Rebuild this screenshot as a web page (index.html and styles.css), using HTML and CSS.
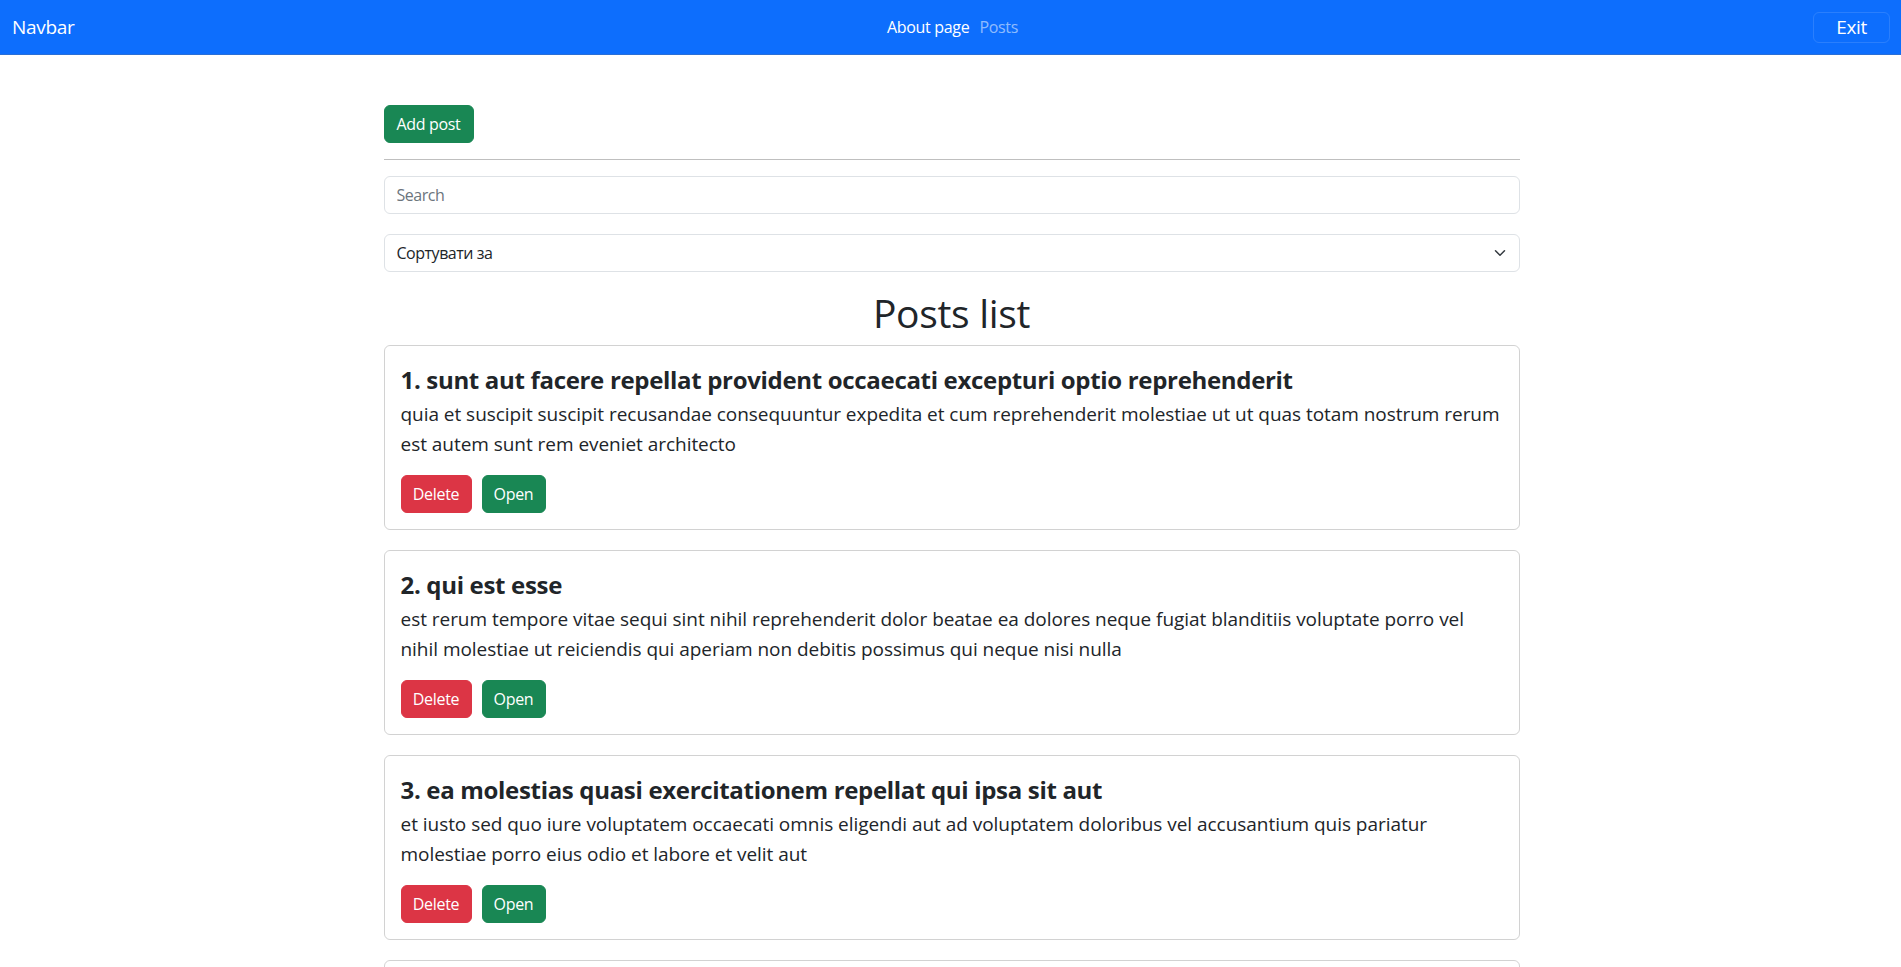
FILE: index.html
```html
<!DOCTYPE html>
<html lang="en">
<head>
<meta charset="utf-8">
<title>Posts</title>
<link rel="stylesheet" href="styles.css">
</head>
<body>
<nav class="navbar">
  <a class="brand" href="#">Navbar</a>
  <div class="nav-links">
    <a class="nav-link active" href="#">About page</a>
    <a class="nav-link" href="#">Posts</a>
  </div>
  <button class="exit-btn">Exit</button>
</nav>
<main class="container">
  <div class="top-actions">
    <button class="btn btn-success">Add post</button>
  </div>
  <hr class="divider">
  <input class="form-control" type="text" placeholder="Search">
  <div class="select-wrap">
    <select class="form-select">
      <option>Сортувати за</option>
    </select>
    <svg class="chevron" width="16" height="12" viewBox="0 0 16 16"><path fill="none" stroke="#343a40" stroke-linecap="round" stroke-linejoin="round" stroke-width="2" d="M2 5l6 6 6-6"/></svg>
  </div>
  <h1 class="list-title">Posts list</h1>
  <div class="posts">
    <div class="card">
      <h4 class="post-title">1. sunt aut facere repellat provident occaecati excepturi optio reprehenderit</h4>
      <p class="post-body">quia et suscipit suscipit recusandae consequuntur expedita et cum reprehenderit molestiae ut ut quas totam nostrum rerum est autem sunt rem eveniet architecto</p>
      <div class="post-actions">
        <button class="btn btn-danger">Delete</button>
        <button class="btn btn-success">Open</button>
      </div>
    </div>
    <div class="card">
      <h4 class="post-title">2. qui est esse</h4>
      <p class="post-body">est rerum tempore vitae sequi sint nihil reprehenderit dolor beatae ea dolores neque fugiat blanditiis voluptate porro vel nihil molestiae ut reiciendis qui aperiam non debitis possimus qui neque nisi nulla</p>
      <div class="post-actions">
        <button class="btn btn-danger">Delete</button>
        <button class="btn btn-success">Open</button>
      </div>
    </div>
    <div class="card">
      <h4 class="post-title">3. ea molestias quasi exercitationem repellat qui ipsa sit aut</h4>
      <p class="post-body">et iusto sed quo iure voluptatem occaecati omnis eligendi aut ad voluptatem doloribus vel accusantium quis pariatur molestiae porro eius odio et labore et velit aut</p>
      <div class="post-actions">
        <button class="btn btn-danger">Delete</button>
        <button class="btn btn-success">Open</button>
      </div>
    </div>
    <div class="card">
      <h4 class="post-title">4. eum et est occaecati</h4>
      <p class="post-body">ullam et saepe reiciendis voluptatem adipisci sit amet autem assumenda provident rerum culpa quis hic commodi nesciunt rem tenetur doloremque ipsam iure quis sunt voluptatem rerum illo velit</p>
      <div class="post-actions">
        <button class="btn btn-danger">Delete</button>
        <button class="btn btn-success">Open</button>
      </div>
    </div>
  </div>
</main>
</body>
</html>
```
FILE: styles.css
```css
* { box-sizing: border-box; }
html, body {
  margin: 0;
  padding: 0;
  background: #fff;
}
body {
  font-family: "Open Sans", "Noto Sans", sans-serif;
  font-size: 16px;
  line-height: 1.5;
  color: #212529;
  letter-spacing: -0.02em;
}
.navbar {
  height: 55px;
  background: #0d6efd;
  border-bottom: 1px solid #2a6fd6;
  display: flex;
  align-items: center;
  justify-content: space-between;
  padding: 0 11px 0 12px;
  position: relative;
}
.brand {
  color: #fff;
  text-decoration: none;
  font-size: 19px;
  line-height: 30px;
}
.nav-links {
  position: absolute;
  left: 50%;
  top: 50%;
  transform: translate(calc(-50% + 2px), -50%);
  display: flex;
  gap: 10px;
}
.nav-link {
  color: rgba(255, 255, 255, 0.55);
  text-decoration: none;
  font-size: 16px;
}
.nav-link.active { color: #fff; }
.exit-btn {
  width: 77px;
  height: 31px;
  background: transparent;
  border: 1px solid rgba(255, 255, 255, 0.12);
  border-radius: 6px;
  color: #fff;
  font-family: inherit;
  font-size: 19px;
  letter-spacing: -0.02em;
  line-height: 1;
  padding: 0;
}
.container {
  width: 1136px;
  margin: 0 0 0 calc(50% - 567px);
  padding-top: 50px;
}
.top-actions { display: flex; }
.btn {
  height: 38px;
  padding: 0 10px;
  border: 1px solid transparent;
  border-radius: 6px;
  color: #fff;
  font-family: inherit;
  font-size: 16px;
  letter-spacing: -0.02em;
  line-height: 1;
  cursor: pointer;
}
.btn-success { background: #198754; border-color: #198754; }
.btn-danger { background: #dc3545; border-color: #dc3545; }
.top-actions .btn { width: 90px; }
.divider {
  margin: 16px 0;
  border: 0;
  border-top: 1px solid rgba(0, 0, 0, 0.25);
}
.form-control, .form-select {
  display: block;
  width: 100%;
  height: 38px;
  padding: 0 12px;
  font-family: inherit;
  font-size: 16px;
  letter-spacing: -0.03em;
  color: #212529;
  background: #fff;
  border: 1px solid #dee2e6;
  border-radius: 6px;
  outline: none;
}
.form-control::placeholder { color: #6c757d; }
.form-control { margin-bottom: 20px; }
.select-wrap { position: relative; }
.form-select {
  appearance: none;
  -webkit-appearance: none;
}
.chevron {
  position: absolute;
  right: 12px;
  top: 13px;
  pointer-events: none;
}
.list-title {
  margin: 17px 0 8px;
  text-align: center;
  font-size: 39px;
  font-weight: 500;
  line-height: 48px;
}
.card {
  border: 1px solid rgba(0, 0, 0, 0.175);
  border-radius: 6px;
  padding: 16px 17px 16px 16px;
  margin-bottom: 20px;
}
.post-title {
  margin: 0 0 1px;
  font-size: 24px;
  font-weight: 700;
  line-height: 36px;
}
.post-body {
  margin: 0 0 16px;
  font-size: 19px;
  line-height: 30px;
  letter-spacing: -0.04px;
}
.post-actions {
  display: flex;
  gap: 10px;
}
.post-actions .btn-danger { width: 71px; }
.post-actions .btn-success { width: 64px; }
```
